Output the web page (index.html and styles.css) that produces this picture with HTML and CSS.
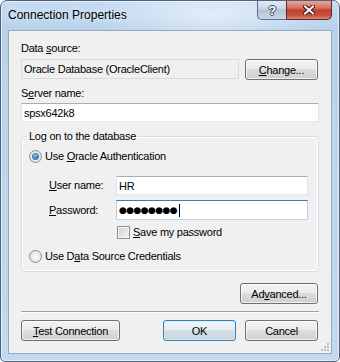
FILE: index.html
```html
<!DOCTYPE html>
<html lang="en">
<head>
    <meta charset="UTF-8">
    <title>Connection Properties</title>
    <link rel="stylesheet" href="styles.css">
</head>
<body>
    <div class="window">
        <div class="titlebar">
            <span class="title">Connection Properties</span>
            <div class="caption-buttons">
                <div class="cap-btn help">?</div>
                <div class="cap-btn close">
                    <svg width="12" height="10" viewBox="0 0 12 10">
                        <path d="M2 1.5 L10 8.5 M10 1.5 L2 8.5" stroke="#3a1a14" stroke-width="4" stroke-linecap="square"/>
                        <path d="M2 1.5 L10 8.5 M10 1.5 L2 8.5" stroke="#ffffff" stroke-width="2" stroke-linecap="square"/>
                    </svg>
                </div>
            </div>
        </div>

        <div class="client">
            <div class="label">Data <u>s</u>ource:</div>
            <div class="source-row">
                <div class="field readonly"><span>Oracle Database (OracleClient)</span></div>
                <button class="btn btn-side"><u>C</u>hange...</button>
            </div>

            <div class="label label-server">S<u>e</u>rver name:</div>
            <div class="field server"><span>spsx642k8</span></div>

            <fieldset class="group">
                <legend>Log on to the database</legend>
                <div class="option option-first">
                    <span class="radio checked"></span>
                    <span>Use <u>O</u>racle Authentication</span>
                </div>
                <div class="cred-row">
                    <span class="cred-label"><u>U</u>ser name:</span>
                    <div class="field cred-field"><span>HR</span></div>
                </div>
                <div class="cred-row">
                    <span class="cred-label"><u>P</u>assword:</span>
                    <div class="field cred-field focused"><span class="dots">●●●●●●●●</span><span class="caret"></span></div>
                </div>
                <div class="save-row">
                    <span class="checkbox"></span>
                    <span><u>S</u>ave my password</span>
                </div>
                <div class="option option-last">
                    <span class="radio"></span>
                    <span>Use D<u>a</u>ta Source Credentials</span>
                </div>
            </fieldset>

            <div class="advanced-row">
                <button class="btn btn-advanced">Ad<u>v</u>anced...</button>
            </div>

            <div class="separator"></div>

            <div class="footer">
                <button class="btn btn-test"><u>T</u>est Connection</button>
                <div class="footer-right">
                    <button class="btn btn-side default">OK</button>
                    <button class="btn btn-side">Cancel</button>
                </div>
            </div>

            <!-- resize grip in de hoek -->
            <svg class="grip" width="10" height="10" viewBox="0 0 10 10">
                <g fill="#b8bec6">
                    <rect x="7" y="1" width="2" height="2"/>
                    <rect x="4" y="4" width="2" height="2"/>
                    <rect x="7" y="4" width="2" height="2"/>
                    <rect x="1" y="7" width="2" height="2"/>
                    <rect x="4" y="7" width="2" height="2"/>
                    <rect x="7" y="7" width="2" height="2"/>
                </g>
            </svg>
        </div>
    </div>
</body>
</html>
```

FILE: styles.css
```css
body {
    margin: 0;
    background: #ffffff;
    font-family: "Liberation Sans", Arial, sans-serif;
    font-size: 11px;
    letter-spacing: -0.25px;
    color: #000000;
}
.window {
    width: 340px;
    height: 362px;
    box-sizing: border-box;
    border: 1px solid #52627a;
    border-radius: 7px 7px 5px 5px;
    padding: 0 7px 7px 7px;
    display: flex;
    flex-direction: column;
    overflow: hidden;
    background:
        radial-gradient(ellipse 120px 30px at 210px 14px, rgba(255, 255, 255, 0.55), rgba(255, 255, 255, 0)),
        linear-gradient(to bottom, #c6dcf3, #b9d2ec 28px, #bcd4ee 120px, #c3d9f0);
    box-shadow: inset 0 0 0 1px rgba(255, 255, 255, 0.5);
}
.titlebar {
    height: 29px;
    display: flex;
    justify-content: space-between;
    align-items: flex-start;
}
.title {
    padding-top: 7px;
    font-size: 12px;
    line-height: 15px;
    letter-spacing: 0;
    text-shadow: 0 0 6px rgba(255, 255, 255, 0.9);
}
.caption-buttons {
    display: flex;
}
.cap-btn {
    height: 19px;
    box-sizing: border-box;
    display: flex;
    justify-content: center;
    align-items: center;
    border: 1px solid #5f6f84;
    border-top: none;
}
.help {
    width: 29px;
    border-right: none;
    border-radius: 0 0 0 5px;
    background: linear-gradient(to bottom, #e3ebf4, #c7d5e4 45%, #b2c3d6 50%, #c9d8e8);
    color: #ffffff;
    font-size: 13px;
    font-weight: bold;
    text-shadow: 1px 0 0 #3a4452, -1px 0 0 #3a4452, 0 1px 0 #3a4452, 0 -1px 0 #3a4452;
}
.close {
    width: 46px;
    border-color: #5a2b25;
    border-radius: 0 0 5px 0;
    background: linear-gradient(to bottom, #e8a698, #d4705f 40%, #c2412f 50%, #c7503c 80%, #dc8a74);
}
.client {
    flex: 1;
    position: relative;
    display: flex;
    flex-direction: column;
    padding: 11px 12px 0 12px;
    background: #f0f0f0;
    border: 1px solid #98a8bd;
}
.label {
    line-height: 13px;
}
.label-server {
    margin-top: 7px;
}
.source-row {
    margin-top: 4px;
    display: flex;
    justify-content: space-between;
    align-items: flex-start;
}
.field {
    box-sizing: border-box;
    height: 19px;
    display: flex;
    align-items: center;
    padding: 0 2px;
    background: #ffffff;
    border: 1px solid #abadb3;
    border-left-color: #e2e3ea;
    border-right-color: #e2e3ea;
    border-bottom-color: #e3e9ef;
}
.field.readonly {
    width: 218px;
    height: 20px;
    background: #f0f0f0;
    border-color: #d9dadd;
}
.server {
    margin-top: 3px;
}
.btn {
    box-sizing: border-box;
    height: 21px;
    padding: 0;
    font-family: inherit;
    font-size: 11px;
    letter-spacing: -0.25px;
    color: #000000;
    border: 1px solid #707070;
    border-radius: 3px;
    background: linear-gradient(to bottom, #f2f2f2, #ebebeb 49%, #dddddd 50%, #cfcfcf);
    box-shadow: inset 0 0 0 1px rgba(255, 255, 255, 0.7);
}
.btn-side {
    width: 73px;
    margin-right: 1px;
}
.btn.default {
    border-color: #3c7fb1;
    background: linear-gradient(to bottom, #f0f5f8, #e5ecf1 49%, #d4dee5 50%, #c8d4dc);
    box-shadow: inset 0 0 0 1px rgba(208, 236, 252, 0.9);
}
.group {
    margin: 8px 0 0 0;
    padding: 7px 7px 8px 7px;
    border: 1px solid #d5dfe5;
    border-radius: 3px;
    box-shadow: inset 0 0 0 1px #ffffff;
}
.group legend {
    padding: 0 2px;
    margin-left: -2px;
    line-height: 13px;
}
.option {
    display: flex;
    align-items: center;
    gap: 3px;
    line-height: 13px;
}
.radio {
    width: 13px;
    height: 13px;
    box-sizing: border-box;
    border-radius: 50%;
    border: 1px solid #8e8f8f;
    background: radial-gradient(circle, #f4f4f4 30%, #d4d4d4 100%);
    display: flex;
    justify-content: center;
    align-items: center;
}
.radio.checked::after {
    content: "";
    width: 5px;
    height: 5px;
    border-radius: 50%;
    background: radial-gradient(circle at 40% 35%, #8fd0f7, #1c6fb6 70%, #0d4b86);
    box-shadow: 0 0 0 1px #3a80bf;
}
.cred-row {
    display: flex;
    align-items: center;
    padding-left: 20px;
}
.cred-row + .cred-row {
    margin-top: 5px;
}
.option-first + .cred-row {
    margin-top: 13px;
}
.cred-label {
    width: 67px;
    line-height: 13px;
}
.cred-field {
    width: 192px;
}
.field.focused {
    border-color: #3d7bad;
    border-left-color: #b5cfe7;
    border-right-color: #b5cfe7;
    border-bottom-color: #b7d9ed;
    height: 20px;
}
.dots {
    font-family: "DejaVu Sans", sans-serif;
    font-size: 9px;
    letter-spacing: -0.6px;
}
.caret {
    width: 1px;
    height: 13px;
    margin-left: 2px;
    background: #000000;
}
.save-row {
    margin-top: 6px;
    padding-left: 88px;
    display: flex;
    align-items: center;
    gap: 3px;
    line-height: 13px;
}
.checkbox {
    width: 13px;
    height: 13px;
    box-sizing: border-box;
    border: 1px solid #8e8f8f;
    background: linear-gradient(135deg, #cbcfd5, #f6f6f6);
    box-shadow: inset 0 0 0 1px #f4f4f4;
}
.option-last {
    margin-top: 11px;
}
.advanced-row {
    margin-top: 11px;
    display: flex;
    justify-content: flex-end;
}
.btn-advanced {
    width: 78px;
    margin-right: 1px;
}
.separator {
    margin-top: 7px;
    border-top: 1px solid #a0a0a0;
    border-bottom: 1px solid #ffffff;
}
.footer {
    margin-top: 7px;
    display: flex;
    justify-content: space-between;
}
.btn-test {
    width: 99px;
}
.footer-right {
    display: flex;
    gap: 8px;
}
.grip {
    position: absolute;
    right: 1px;
    bottom: 1px;
}
```
